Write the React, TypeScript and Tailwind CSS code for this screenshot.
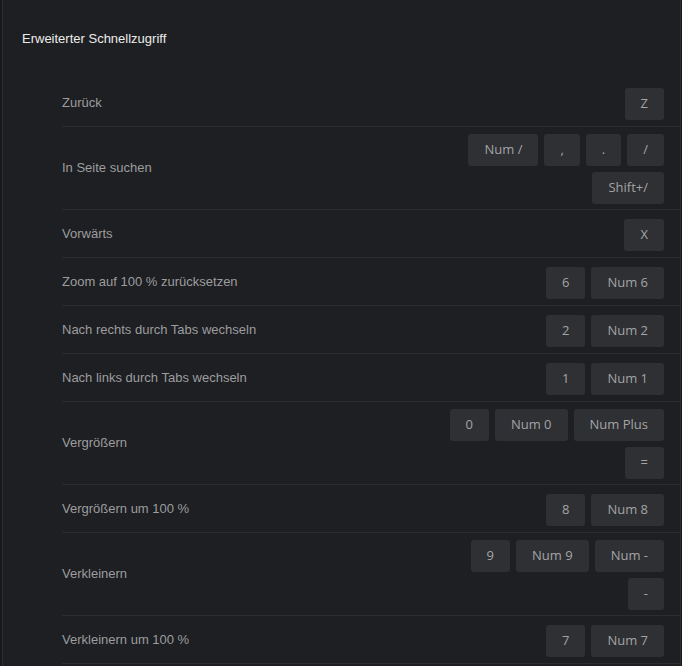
import React from 'react';

type Shortcut = { label: string; keys: string[] };

const shortcuts: Shortcut[] = [
  { label: 'Zurück', keys: ['Z'] },
  { label: 'In Seite suchen', keys: ['Num /', ',', '.', '/', 'Shift+/'] },
  { label: 'Vorwärts', keys: ['X'] },
  { label: 'Zoom auf 100 % zurücksetzen', keys: ['6', 'Num 6'] },
  { label: 'Nach rechts durch Tabs wechseln', keys: ['2', 'Num 2'] },
  { label: 'Nach links durch Tabs wechseln', keys: ['1', 'Num 1'] },
  { label: 'Vergrößern', keys: ['0', 'Num 0', 'Num Plus', '='] },
  { label: 'Vergrößern um 100 %', keys: ['8', 'Num 8'] },
  { label: 'Verkleinern', keys: ['9', 'Num 9', 'Num -', '-'] },
  { label: 'Verkleinern um 100 %', keys: ['7', 'Num 7'] },
];

const Key: React.FC<{ k: string }> = ({ k }) => (
  <span className="m-[3px] flex h-[32px] items-center rounded-[3px] bg-[#2e3033] px-4 font-['Open_Sans',sans-serif] text-[13px] text-[#a3a4a6]">
    {k}
  </span>
);

const App: React.FC = () => {
  return (
    <div className="min-h-screen bg-[#19191b] pl-[2px] pr-[1px] font-['Liberation_Sans',Arial,sans-serif]">
      <div className="min-h-screen border-x border-[#2c2d30] bg-[#1e1f22]">
        {/* Header */}
        <h2 className="pl-[19px] pt-[31px] text-[13px] leading-[16px] text-[#ececec]">
          Erweiterter Schnellzugriff
        </h2>

        {/* Shortcut list */}
        <div className="ml-[59px] mt-[32px]">
          {shortcuts.map((s) => (
            <div
              key={s.label}
              className="flex min-h-[48px] items-center justify-between border-b border-[#2b2c2f] py-[3px] pr-[13px]"
            >
              <span className="text-[13px] text-[#9c9d9f]">{s.label}</span>
              <div className="-mb-[1px] flex max-w-[232px] flex-wrap justify-end pt-[1px]">
                {s.keys.map((k) => (
                  <Key key={k} k={k} />
                ))}
              </div>
            </div>
          ))}
        </div>
      </div>
    </div>
  );
};

export default App;
